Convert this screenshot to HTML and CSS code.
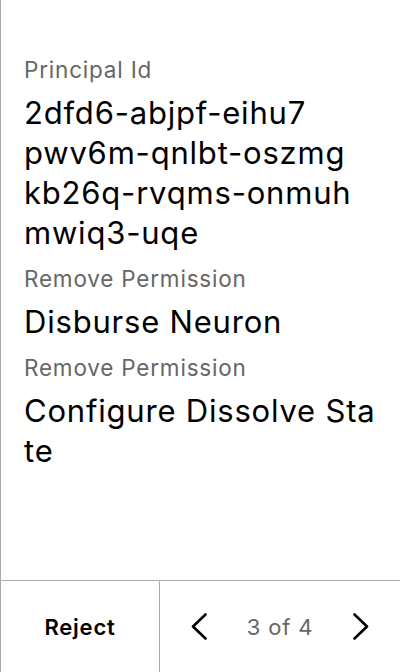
FILE: index.html
```html
<!DOCTYPE html>
<html>
<head>
<meta charset="utf-8">
<link rel="stylesheet" href="styles.css">
</head>
<body>
<div class="screen">
  <main class="content">
    <div class="field">
      <div class="label">Principal Id</div>
      <div class="value">2dfd6-abjpf-eihu7<br>pwv6m-qnlbt-oszmg<br>kb26q-rvqms-onmuh<br>mwiq3-uqe</div>
    </div>
    <div class="field">
      <div class="label">Remove Permission</div>
      <div class="value">Disburse Neuron</div>
    </div>
    <div class="field">
      <div class="label">Remove Permission</div>
      <div class="value breakall">Configure Dissolve State</div>
    </div>
  </main>
  <footer class="footer">
    <div class="reject">Reject</div>
    <div class="pager">
      <svg class="chev" width="24" height="28" viewBox="0 0 24 28"><polyline points="18.5,1.5 6,13.5 18.5,25.5" fill="none" stroke="#000" stroke-width="2.6" stroke-linecap="round" stroke-linejoin="round"/></svg>
      <span class="count">3 of 4</span>
      <svg class="chev" width="24" height="28" viewBox="0 0 24 28"><polyline points="5.5,1.5 18,13.5 5.5,25.5" fill="none" stroke="#000" stroke-width="2.6" stroke-linecap="round" stroke-linejoin="round"/></svg>
    </div>
  </footer>
</div>
</body>
</html>
```
FILE: styles.css
```css
* { box-sizing: border-box; }
html, body { margin: 0; padding: 0; background: #fff; }
body { font-family: Inter, "Noto Sans", sans-serif; color: #000; letter-spacing: 0.05em; }
.screen {
  width: 400px;
  height: 672px;
  border-left: 1px solid #ababab;
  display: flex;
  flex-direction: column;
}
.content {
  flex: 1;
  padding: 56px 16px 0 23px;
  display: flex;
  flex-direction: column;
  gap: 12px;
}
.field {
  display: flex;
  flex-direction: column;
  gap: 9px;
}
.label {
  font-size: 22.5px;
  line-height: 28px;
  color: #666;
}
.value {
  font-size: 31px;
  line-height: 40px;
  color: #000;
}
.breakall { word-break: break-all; }
.footer {
  height: 92px;
  border-top: 1px solid #ababab;
  display: flex;
}
.reject {
  width: 159px;
  border-right: 1px solid #ababab;
  display: flex;
  align-items: center;
  justify-content: center;
  font-size: 22px;
  font-weight: 600;
}
.pager {
  flex: 1;
  display: flex;
  align-items: center;
  justify-content: space-between;
  padding: 0 27px;
}
.count {
  font-size: 22px;
  color: #666;
}
.chev { display: block; }
```
